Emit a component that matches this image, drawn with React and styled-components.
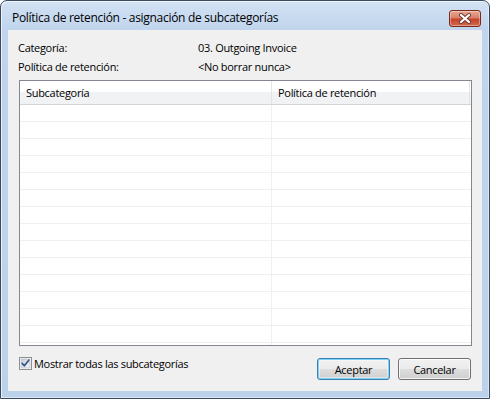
import React from 'react';
import styled, { createGlobalStyle } from 'styled-components';

const GlobalStyle = createGlobalStyle`
  html, body { margin: 0; padding: 0; background: #ffffff; }
  body {
    font-family: "Open Sans", "Noto Sans", "DejaVu Sans", sans-serif;
    font-size: 11px;
    letter-spacing: -0.3px;
    color: #000;
  }
  * { box-sizing: border-box; }
`;

const Window = styled.div`
  width: 490px;
  height: 399px;
  border: 1px solid #3a4a60;
  border-radius: 7px 7px 0 0;
  background: linear-gradient(#d3e2f4 0px, #c0d5ed 28px, #bcd2eb 100%);
  box-shadow: inset 1px 1px 0 rgba(255, 255, 255, 0.65), inset -1px -1px 0 rgba(255, 255, 255, 0.45);
  display: flex;
  flex-direction: column;
  overflow: hidden;
`;

const TitleBar = styled.div`
  height: 29px;
  flex: none;
  display: flex;
  align-items: flex-start;
  padding: 0 8px 0 11px;
`;

const Title = styled.div`
  flex: 1;
  font-size: 12px;
  line-height: 16px;
  margin-top: 9px;
  letter-spacing: -0.3px;
  white-space: nowrap;
`;

const CloseButton = styled.button`
  width: 32px;
  height: 17px;
  margin-top: 9px;
  padding: 0;
  border: 1px solid #7a2a1c;
  border-radius: 3px;
  background: linear-gradient(#e8a894 0%, #d9806a 45%, #c5432a 55%, #d26a4c 100%);
  box-shadow: inset 0 0 0 1px rgba(255, 255, 255, 0.35);
  display: flex;
  align-items: center;
  justify-content: center;
`;

const Panel = styled.div`
  flex: 1;
  margin: 0 7px 7px 7px;
  background: #f0f0f0;
  padding: 8px 10px 0 11px;
  display: flex;
  flex-direction: column;
`;

const InfoGrid = styled.div`
  display: grid;
  grid-template-columns: 180px 1fr;
  grid-auto-rows: 19px;
  align-items: center;
  margin-left: -1px;
`;

const InfoText = styled.div`
  line-height: 19px;
  white-space: nowrap;
`;

const ListBox = styled.div`
  margin-top: 4px;
  height: 266px;
  border: 1px solid #828790;
  background: #fff;
  overflow: hidden;
  display: flex;
  flex-direction: column;
`;

const HeaderRow = styled.div`
  height: 24px;
  flex: none;
  display: flex;
  border-bottom: 1px solid #d5d5d5;
  background: linear-gradient(#ffffff 0%, #ffffff 45%, #f1f2f4 50%, #f1f2f4 100%);
`;

const HeaderCell = styled.div`
  width: ${p => p.$w}px;
  flex: none;
  border-right: 1px solid #e3e5e8;
  padding-left: 6px;
  line-height: 23px;
  white-space: nowrap;
`;

const Row = styled.div`
  height: 17px;
  flex: none;
  display: flex;
  border-bottom: 1px solid #f0f0f0;
`;

const Cell = styled.div`
  width: ${p => p.$w}px;
  flex: none;
  border-right: ${p => (p.$sep ? '1px solid #f0f0f0' : 'none')};
`;

const Footer = styled.div`
  margin-top: 12px;
  display: flex;
  align-items: flex-start;
`;

const CheckLabel = styled.label`
  display: flex;
  align-items: center;
  margin-top: -1px;
  gap: 2px;
  flex: 1;
  line-height: 13px;
`;

const Buttons = styled.div`
  display: flex;
  gap: 8px;
  margin-right: 1px;
`;

const Button = styled.button`
  width: 73px;
  height: 22px;
  padding: 0;
  font-family: inherit;
  font-size: 11px;
  letter-spacing: -0.3px;
  color: #000;
  border: 1px solid ${p => (p.$default ? '#3c7fb1' : '#707070')};
  border-radius: 3px;
  background: linear-gradient(#f2f2f2 0%, #ebebeb 50%, #dddddd 51%, #cfcfcf 100%);
  box-shadow: ${p =>
    p.$default
      ? 'inset 0 0 0 1px #7dd3f7, inset 0 0 0 2px rgba(255,255,255,0.4)'
      : 'inset 0 0 0 1px rgba(255,255,255,0.75)'};
`;

const CheckIcon = () => (
  <svg width="13" height="13" viewBox="0 0 13 13">
    <defs>
      <linearGradient id="cbg" x1="0" y1="0" x2="1" y2="1">
        <stop offset="0" stopColor="#c9ced6" />
        <stop offset="1" stopColor="#f4f6f9" />
      </linearGradient>
    </defs>
    <rect x="0.5" y="0.5" width="12" height="12" fill="#fff" stroke="#8e8f8f" />
    <rect x="2" y="2" width="9" height="9" fill="url(#cbg)" stroke="#a9b3c4" strokeWidth="0.6" />
    <path d="M3.2 6.4 L5.3 8.8 L9.8 3.2" fill="none" stroke="#3a5490" strokeWidth="1.7" strokeLinejoin="round" strokeLinecap="round" />
  </svg>
);

const CloseX = () => (
  <svg width="14" height="11" viewBox="0 0 14 11">
    <path d="M3 2 L11 9 M11 2 L3 9" stroke="#6b3a32" strokeWidth="4" strokeLinecap="round" />
    <path d="M3 2 L11 9 M11 2 L3 9" stroke="#ffffff" strokeWidth="2.2" strokeLinecap="round" />
  </svg>
);

const rows = Array.from({ length: 15 }, (_, i) => i);

export default function App() {
  return (
    <>
      <GlobalStyle />
      <Window>
        <TitleBar>
          <Title>Política de retención - asignación de subcategorías</Title>
          <CloseButton aria-label="Cerrar">
            <CloseX />
          </CloseButton>
        </TitleBar>
        <Panel>
          <InfoGrid>
            <InfoText>Categoría:</InfoText>
            <InfoText>03. Outgoing Invoice</InfoText>
            <InfoText>Política de retención:</InfoText>
            <InfoText>&lt;No borrar nunca&gt;</InfoText>
          </InfoGrid>
          <ListBox>
            <HeaderRow>
              <HeaderCell $w={252}>Subcategoría</HeaderCell>
              <HeaderCell $w={198}>Política de retención</HeaderCell>
            </HeaderRow>
            {rows.map(i => (
              <Row key={i}>
                <Cell $w={252} $sep />
                <Cell $w={199} />
              </Row>
            ))}
          </ListBox>
          <Footer>
            <CheckLabel>
              <CheckIcon />
              <span>Mostrar todas las subcategorías</span>
            </CheckLabel>
            <Buttons>
              <Button $default>Aceptar</Button>
              <Button>Cancelar</Button>
            </Buttons>
          </Footer>
        </Panel>
      </Window>
    </>
  );
}
